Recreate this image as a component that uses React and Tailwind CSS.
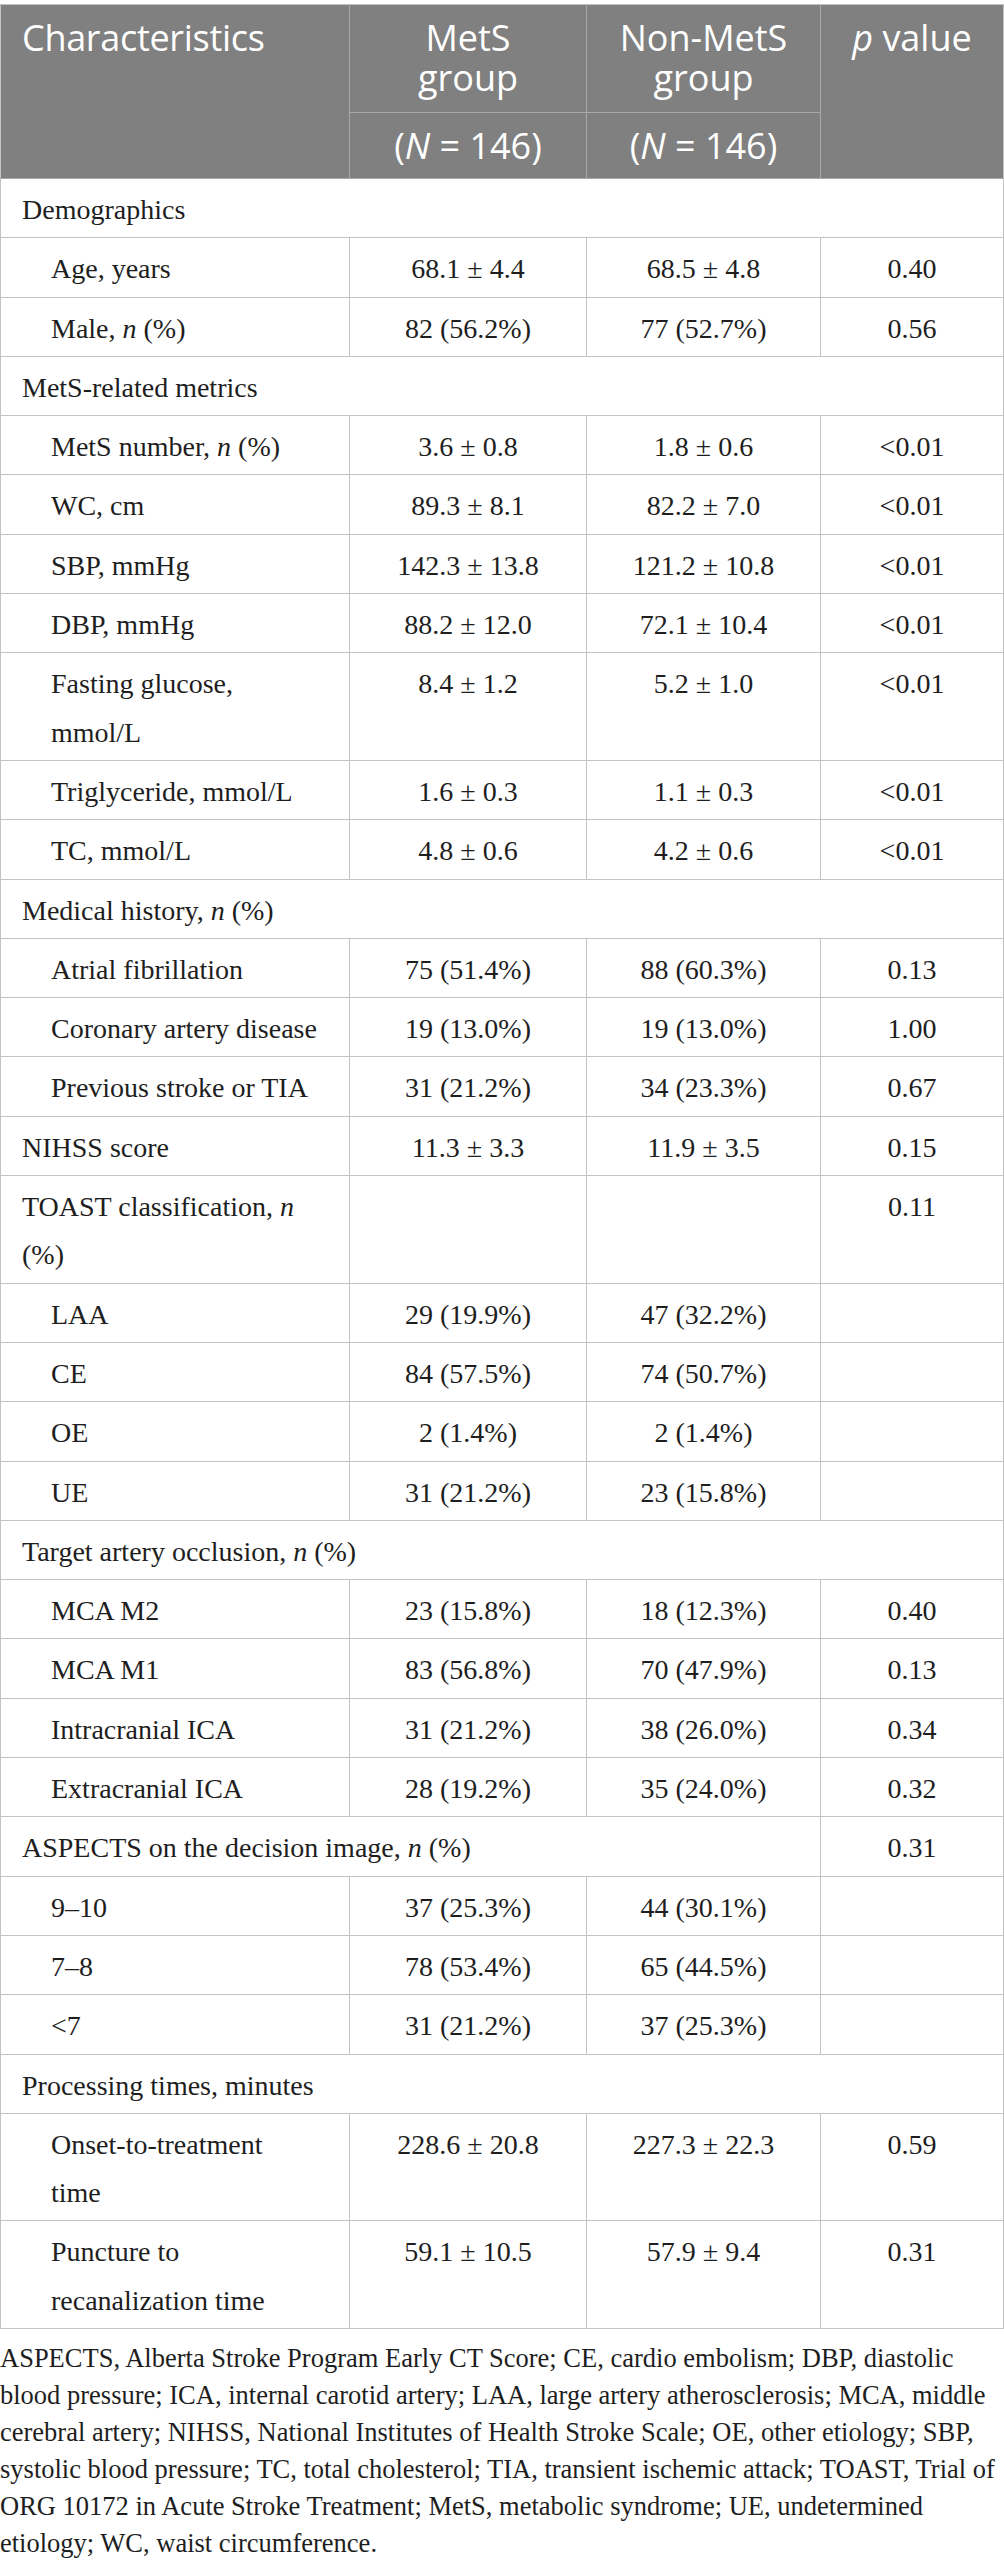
import React from "react";

const I = ({ children }) => <i>{children}</i>;

const rows = [
  { type: "group", label: "Demographics" },
  { label: "Age, years", a: "68.1 ± 4.4", b: "68.5 ± 4.8", p: "0.40" },
  { label: <>Male, <I>n</I> (%)</>, a: "82 (56.2%)", b: "77 (52.7%)", p: "0.56" },
  { type: "group", label: "MetS-related metrics" },
  { label: <>MetS number, <I>n</I> (%)</>, a: "3.6 ± 0.8", b: "1.8 ± 0.6", p: "<0.01" },
  { label: "WC, cm", a: "89.3 ± 8.1", b: "82.2 ± 7.0", p: "<0.01" },
  { label: "SBP, mmHg", a: "142.3 ± 13.8", b: "121.2 ± 10.8", p: "<0.01" },
  { label: "DBP, mmHg", a: "88.2 ± 12.0", b: "72.1 ± 10.4", p: "<0.01" },
  { label: <>Fasting glucose,<br />mmol/L</>, a: "8.4 ± 1.2", b: "5.2 ± 1.0", p: "<0.01" },
  { label: "Triglyceride, mmol/L", a: "1.6 ± 0.3", b: "1.1 ± 0.3", p: "<0.01" },
  { label: "TC, mmol/L", a: "4.8 ± 0.6", b: "4.2 ± 0.6", p: "<0.01" },
  { type: "group", label: <>Medical history, <I>n</I> (%)</> },
  { label: "Atrial fibrillation", a: "75 (51.4%)", b: "88 (60.3%)", p: "0.13" },
  { label: "Coronary artery disease", a: "19 (13.0%)", b: "19 (13.0%)", p: "1.00" },
  { label: "Previous stroke or TIA", a: "31 (21.2%)", b: "34 (23.3%)", p: "0.67" },
  { label: "NIHSS score", top: true, a: "11.3 ± 3.3", b: "11.9 ± 3.5", p: "0.15" },
  { label: <>TOAST classification, <I>n</I><br />(%)</>, top: true, a: "", b: "", p: "0.11" },
  { label: "LAA", a: "29 (19.9%)", b: "47 (32.2%)", p: "" },
  { label: "CE", a: "84 (57.5%)", b: "74 (50.7%)", p: "" },
  { label: "OE", a: "2 (1.4%)", b: "2 (1.4%)", p: "" },
  { label: "UE", a: "31 (21.2%)", b: "23 (15.8%)", p: "" },
  { type: "group", label: <>Target artery occlusion, <I>n</I> (%)</> },
  { label: "MCA M2", a: "23 (15.8%)", b: "18 (12.3%)", p: "0.40" },
  { label: "MCA M1", a: "83 (56.8%)", b: "70 (47.9%)", p: "0.13" },
  { label: "Intracranial ICA", a: "31 (21.2%)", b: "38 (26.0%)", p: "0.34" },
  { label: "Extracranial ICA", a: "28 (19.2%)", b: "35 (24.0%)", p: "0.32" },
  { type: "span3", label: <>ASPECTS on the decision image, <I>n</I> (%)</>, p: "0.31" },
  { label: "9–10", a: "37 (25.3%)", b: "44 (30.1%)", p: "" },
  { label: "7–8", a: "78 (53.4%)", b: "65 (44.5%)", p: "" },
  { label: "<7", a: "31 (21.2%)", b: "37 (25.3%)", p: "" },
  { type: "group", label: "Processing times, minutes" },
  { label: <>Onset-to-treatment<br />time</>, a: "228.6 ± 20.8", b: "227.3 ± 22.3", p: "0.59" },
  { label: <>Puncture to<br />recanalization time</>, a: "59.1 ± 10.5", b: "57.9 ± 9.4", p: "0.31" },
];

const td = "border border-[#c3c3c3] align-top pt-[7px] pb-[3px] leading-[48.3px]";

export default function App() {
  return (
    <div className="w-[1004px] bg-white pt-[4px] text-[#1e1e1e]" style={{ fontFamily: '"Liberation Serif", serif' }}>
      <table className="w-[1003px] table-fixed border-collapse">
        <colgroup>
          <col className="w-[349px]" />
          <col className="w-[237px]" />
          <col className="w-[234px]" />
          <col className="w-[183px]" />
        </colgroup>
        <thead className="bg-[#808080] text-white text-[36px] leading-[40px] font-['Open_Sans',sans-serif]">
          <tr>
            <th rowSpan={2} className="border border-[#a9a9a9] border-t-[#c3c3c3] border-l-[#c3c3c3] align-top text-left font-normal pl-[21px] pt-[13px] pb-[14px] tracking-[-0.3px]">
              Characteristics
            </th>
            <th className="border border-[#a9a9a9] border-t-[#c3c3c3] align-top text-center font-normal pt-[13px] pb-[14px]">
              MetS<br />group
            </th>
            <th className="border border-[#a9a9a9] border-t-[#c3c3c3] align-top text-center font-normal pt-[13px] pb-[14px]">
              Non-MetS<br />group
            </th>
            <th rowSpan={2} className="border border-[#a9a9a9] border-t-[#c3c3c3] border-r-[#c3c3c3] align-top text-center font-normal pt-[13px] pb-[14px]">
              <i>p</i> value
            </th>
          </tr>
          <tr>
            <th className="border border-[#a9a9a9] align-top text-center font-normal pt-[13px] pb-[12px]">
              (<i>N</i> = 146)
            </th>
            <th className="border border-[#a9a9a9] align-top text-center font-normal pt-[13px] pb-[12px]">
              (<i>N</i> = 146)
            </th>
          </tr>
        </thead>
        <tbody className="text-[28px]">
          {rows.map((r, i) => {
            if (r.type === "group") {
              return (
                <tr key={i}>
                  <td colSpan={4} className={`${td} pl-[21px] text-left whitespace-nowrap`}>{r.label}</td>
                </tr>
              );
            }
            if (r.type === "span3") {
              return (
                <tr key={i}>
                  <td colSpan={3} className={`${td} pl-[21px] text-left whitespace-nowrap`}>{r.label}</td>
                  <td className={`${td} text-center`}>{r.p}</td>
                </tr>
              );
            }
            return (
              <tr key={i}>
                <td className={`${td} ${r.top ? "pl-[21px]" : "pl-[50px]"} pr-[8px] text-left`}>{r.label}</td>
                <td className={`${td} text-center`}>{r.a}</td>
                <td className={`${td} text-center`}>{r.b}</td>
                <td className={`${td} text-center`}>{r.p}</td>
              </tr>
            );
          })}
        </tbody>
      </table>
      <p className="mt-[11px] text-[26.5px] leading-[37px] whitespace-nowrap">
        ASPECTS, Alberta Stroke Program Early CT Score; CE, cardio embolism; DBP, diastolic<br />
        blood pressure; ICA, internal carotid artery; LAA, large artery atherosclerosis; MCA, middle<br />
        cerebral artery; NIHSS, National Institutes of Health Stroke Scale; OE, other etiology; SBP,<br />
        systolic blood pressure; TC, total cholesterol; TIA, transient ischemic attack; TOAST, Trial of<br />
        ORG 10172 in Acute Stroke Treatment; MetS, metabolic syndrome; UE, undetermined<br />
        etiology; WC, waist circumference.
      </p>
    </div>
  );
}
